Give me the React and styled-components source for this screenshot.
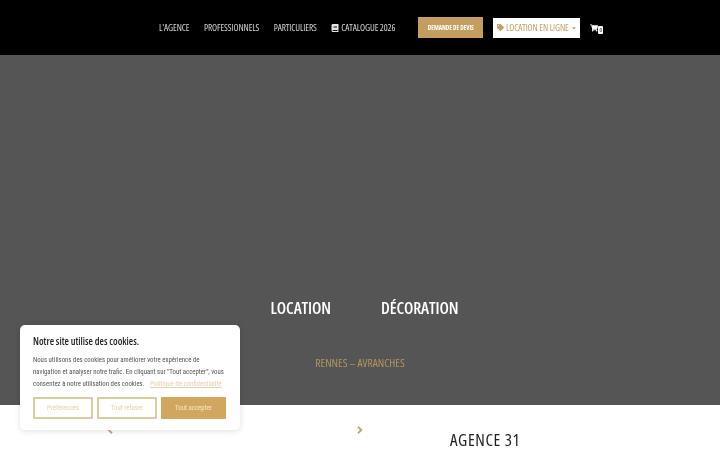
import React from 'react';
import styled, { createGlobalStyle } from 'styled-components';
import { FaShoppingCart, FaTag, FaBook, FaChevronLeft, FaChevronRight, FaCaretDown } from 'react-icons/fa';

const GOLD = '#c59d5f';

const Global = createGlobalStyle`
  html, body { margin: 0; padding: 0; height: 450px; overflow: hidden; background: #fff; }
  body { font-family: "Open Sans", "Liberation Sans", sans-serif; font-stretch: 75%; }
  * { box-sizing: border-box; }
`;

const Page = styled.div`
  width: 720px;
  height: 450px;
  overflow: hidden;
  position: relative;
  will-change: transform;
`;

const Header = styled.header`
  height: 55px;
  background: #000;
  display: flex;
  align-items: center;
  padding-left: 159px;
`;

const Nav = styled.nav`
  display: flex;
  align-items: center;
  gap: 14.5px;
`;

const NavLink = styled.a`
  display: flex;
  align-items: center;
  gap: 2px;
  color: #d4d4d4;
  font-size: 9.3px;
  letter-spacing: -0.1px;
  white-space: nowrap;
`;

const QuoteButton = styled.a`
  width: 65px;
  height: 21px;
  margin-left: 23px;
  background: ${GOLD};
  color: #fff;
  font-size: 6.2px;
  font-weight: 700;
  display: flex;
  align-items: center;
  justify-content: center;
  white-space: nowrap;
`;

const RentButton = styled.a`
  width: 87px;
  height: 20px;
  margin-left: 10px;
  background: #fff;
  color: ${GOLD};
  font-size: 9.3px;
  letter-spacing: -0.1px;
  display: flex;
  align-items: center;
  justify-content: center;
  gap: 2px;
  white-space: nowrap;
`;

const Cart = styled.a`
  position: relative;
  margin-left: 10px;
  width: 14px;
  height: 14px;
  color: #fff;
  display: flex;
  align-items: center;
`;

const CartCount = styled.span`
  position: absolute;
  left: 8px;
  top: 5px;
  width: 5px;
  height: 8px;
  background: #fff;
  color: #000;
  border-radius: 1px;
  font-size: 6px;
  line-height: 8px;
  text-align: center;
`;

const Hero = styled.section`
  height: 350px;
  background: #555;
  display: flex;
  flex-direction: column;
  align-items: center;
  padding-top: 243px;
`;

const HeroTitles = styled.div`
  display: flex;
  gap: 50px;
  margin-left: 9px;
`;

const HeroTitle = styled.h2`
  margin: 0;
  color: #fff;
  font-size: 16.5px;
  line-height: 20px;
  font-weight: 600;
  letter-spacing: -0.1px;
`;

const HeroPlace = styled.p`
  margin: 38px 0 0;
  color: #b2945f;
  font-size: 11.5px;
  line-height: 14px;
`;

const Below = styled.section`
  display: flex;
  align-items: flex-start;
  padding-top: 21px;
  color: ${GOLD};
`;

const Chevron = styled.span`
  display: flex;
  font-size: 8px;
  margin-left: ${(p) => p.$left}px;
  svg { stroke: currentColor; stroke-width: 50; }
`;

const AgencyTitle = styled.h2`
  margin: 4px 0 0 86px;
  color: #222;
  font-size: 17px;
  line-height: 20px;
  font-weight: 400;
  letter-spacing: 0.6px;
`;

const CookieBox = styled.aside`
  position: absolute;
  left: 20px;
  top: 325px;
  width: 220px;
  height: 105px;
  background: #fff;
  border-radius: 5px;
  box-shadow: 0 1px 6px rgba(0, 0, 0, 0.12);
  padding: 10px 13px 0 13px;
`;

const CookieTitle = styled.h3`
  margin: 0;
  color: #222;
  font-size: 10px;
  line-height: 12px;
  font-weight: 600;
`;

const CookieText = styled.p`
  margin: 7px 0 0;
  width: 200px;
  color: #555;
  font-family: "Roboto", sans-serif;
  font-size: 6.8px;
  line-height: 12px;
  white-space: nowrap;
`;

const PolicyLink = styled.a`
  margin-left: 4px;
  color: #e3d2ac;
  text-decoration: underline;
`;

const CookieActions = styled.div`
  display: flex;
  gap: 4px;
  margin-top: 7px;
`;

const CookieButton = styled.button`
  width: ${(p) => (p.$primary ? 65 : 60)}px;
  height: 22px;
  padding: 0;
  border: 2px solid ${(p) => (p.$primary ? '#d1a75f' : '#dccb9f')};
  border-radius: 1px;
  background: ${(p) => (p.$primary ? '#d1a75f' : '#fff')};
  color: ${(p) => (p.$primary ? '#f5e6c8' : '#e3d2ac')};
  font-family: "Roboto", sans-serif;
  font-stretch: 75%;
  font-size: 6.8px;
`;

export default function App() {
  return (
    <Page>
      <Global />
      <Header>
        <Nav>
          <NavLink>L'AGENCE</NavLink>
          <NavLink>PROFESSIONNELS</NavLink>
          <NavLink>PARTICULIERS</NavLink>
          <NavLink><FaBook size={8} color="#e6e6e6" /> CATALOGUE 2026</NavLink>
        </Nav>
        <QuoteButton>DEMANDE DE DEVIS</QuoteButton>
        <RentButton><FaTag size={7} /> LOCATION EN LIGNE <FaCaretDown size={6} /></RentButton>
        <Cart><FaShoppingCart size={8} /><CartCount>0</CartCount></Cart>
      </Header>
      <Hero>
        <HeroTitles>
          <HeroTitle>LOCATION</HeroTitle>
          <HeroTitle>DÉCORATION</HeroTitle>
        </HeroTitles>
        <HeroPlace>RENNES – AVRANCHES</HeroPlace>
      </Hero>
      <Below>
        <Chevron $left={106}><FaChevronLeft /></Chevron>
        <Chevron $left={242}><FaChevronRight /></Chevron>
        <AgencyTitle>AGENCE 31</AgencyTitle>
      </Below>
      <CookieBox>
        <CookieTitle>Notre site utilise des cookies.</CookieTitle>
        <CookieText>
          Nous utilisons des cookies pour améliorer votre expérience de<br />
          navigation et analyser notre trafic. En cliquant sur "Tout accepter", vous<br />
          consentez à notre utilisation des cookies. <PolicyLink>Politique de confidentialité</PolicyLink>
        </CookieText>
        <CookieActions>
          <CookieButton>Préférences</CookieButton>
          <CookieButton>Tout refuser</CookieButton>
          <CookieButton $primary>Tout accepter</CookieButton>
        </CookieActions>
      </CookieBox>
    </Page>
  );
}
